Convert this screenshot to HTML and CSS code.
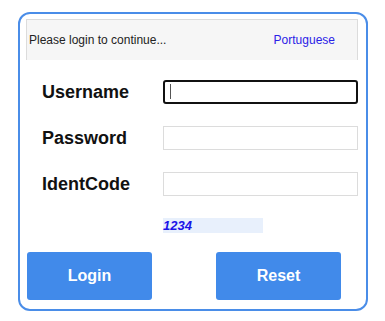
FILE: index.html
```html
<!DOCTYPE html>
<html>
<head>
<meta charset="utf-8">
<link rel="stylesheet" href="styles.css">
</head>
<body>
<div class="card">
  <div class="header">
    <span class="prompt">Please login to continue...</span>
    <a class="lang" href="#">Portuguese</a>
  </div>
  <div class="form">
    <label class="label" for="u">Username</label>
    <span class="field-wrap caret">
      <input class="field focused" id="u" type="text">
    </span>
    <label class="label" for="p">Password</label>
    <input class="field" id="p" type="password">
    <label class="label" for="c">IdentCode</label>
    <input class="field" id="c" type="text">
    <span></span>
    <div class="captcha">1234</div>
  </div>
  <div class="actions">
    <button class="btn">Login</button>
    <button class="btn">Reset</button>
  </div>
</div>
</body>
</html>
```
FILE: styles.css
```css
html, body {
  margin: 0;
  padding: 0;
  background: #fff;
}
body {
  padding: 12px 0 0 18px;
  font-family: "Liberation Sans", Arial, sans-serif;
}
.card {
  box-sizing: border-box;
  width: 350px;
  height: 299px;
  border: 2px solid #4a8de8;
  border-radius: 12px;
  padding: 5px 8px 0 6px;
}
.header {
  box-sizing: border-box;
  height: 41px;
  background: #f6f6f6;
  border: 1px solid #dcdcdc;
  border-bottom: none;
  display: flex;
  align-items: center;
  justify-content: space-between;
  padding: 0 22px 0 2px;
  font-size: 12px;
}
.prompt {
  color: #222;
}
.lang {
  color: #2a22e6;
  text-decoration: none;
}
.form {
  display: grid;
  grid-template-columns: 121px 195px;
  column-gap: 0;
  row-gap: 22px;
  padding: 20px 0 0 16px;
  align-items: center;
}
.label {
  font-size: 18px;
  font-weight: bold;
  color: #111;
}
.field-wrap {
  position: relative;
  display: block;
  height: 24px;
}
.caret::after {
  content: "";
  position: absolute;
  left: 7px;
  top: 4px;
  width: 1px;
  height: 15px;
  background: #555;
}
.field {
  box-sizing: border-box;
  display: block;
  width: 195px;
  height: 24px;
  margin: 0;
  border: 1px solid #dcdcdc;
  border-radius: 0;
  padding: 0 6px;
  font-size: 13px;
  background: #fff;
  outline: none;
}
.field.focused {
  border: 2px solid #111;
  border-radius: 3px;
}
.captcha {
  width: 100px;
  height: 15px;
  background: #e8f0fc;
  color: #1b14e8;
  font-size: 13px;
  font-weight: bold;
  font-style: italic;
  line-height: 15px;
}
.actions {
  display: flex;
  gap: 64px;
  padding: 19px 0 0 1px;
}
.btn {
  width: 125px;
  height: 48px;
  border: none;
  border-radius: 3px;
  background: #418aea;
  color: #fff;
  font-family: "Liberation Sans", Arial, sans-serif;
  font-size: 16px;
  font-weight: bold;
  padding: 0;
}
```
